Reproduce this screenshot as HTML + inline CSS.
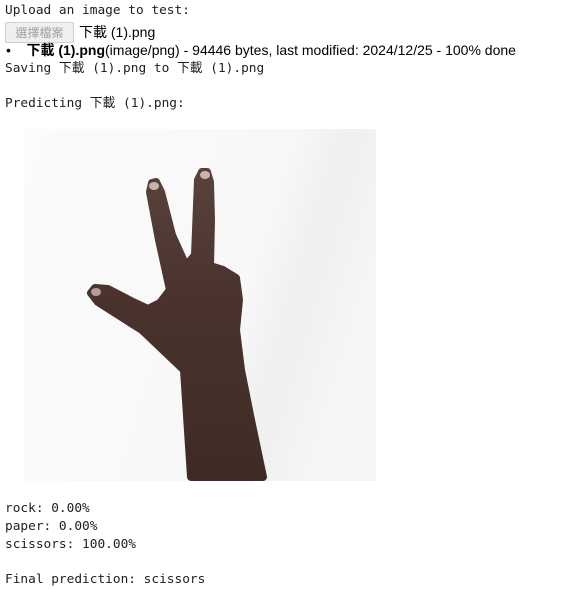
<!DOCTYPE html>
<html><head><meta charset="utf-8"><style>
body{margin:0;width:561px;height:589px;background:#fff;position:relative;overflow:hidden;color:#212121}
.m{position:absolute;left:5px;font-family:"DejaVu Sans Mono","Noto Sans CJK TC",monospace;font-size:12.8px;white-space:pre;line-height:17px}
.s{position:absolute;font-family:"Liberation Sans","Noto Sans CJK TC",sans-serif;font-size:14px;white-space:pre;line-height:17px;color:#000}
.btn{position:absolute;left:5px;top:22px;width:67px;height:19px;border:1px solid #d0d0d0;border-radius:2px;background:#efefef;color:#a0a0a0;font-family:"Noto Sans CJK TC",sans-serif;font-size:12px;line-height:19px;text-align:center}
</style></head><body>
<div class="m" style="top:2px">Upload an image to test:</div>
<div class="btn">選擇檔案</div>
<div class="s" style="left:79px;top:24px">下載 (1).png</div>
<div class="s" style="left:6px;top:42px">•    <b>下載 (1).png</b>(image/png) - 94446 bytes, last modified: 2024/12/25 - 100% done</div>
<div class="m" style="top:60px">Saving 下載 (1).png to 下載 (1).png</div>
<div class="m" style="top:95px">Predicting 下載 (1).png:</div>
<svg style="position:absolute;left:0;top:0" width="561" height="589">
<defs>
<linearGradient id="bg" x1="0" y1="0" x2="1" y2="0.3">
<stop offset="0" stop-color="#fbfbfb"/><stop offset="0.7" stop-color="#f8f8f8"/><stop offset="0.85" stop-color="#efefef"/><stop offset="1" stop-color="#f5f5f5"/></linearGradient>
<linearGradient id="sk" x1="0" y1="0" x2="0" y2="1">
<stop offset="0" stop-color="#5a423c"/><stop offset="0.4" stop-color="#4a332d"/><stop offset="1" stop-color="#3f2b26"/></linearGradient>
</defs>
<rect x="24" y="129" width="352" height="352" fill="url(#bg)"/>
<path fill="url(#sk)" stroke="url(#sk)" stroke-width="8" stroke-linejoin="round" d="M191,477 L184,370 L163,350 L142,330 L120,316 L98,302 L91,293 L95,288 L108,289 L133,302 L148,309 L160,303 L170,290 L159,240 L150,192 L152,183 L156,182 L161,192 L172,235 L186,266 L195,255 L198,180 L202,172 L207,172 L210,182 L211,220 L210,266 L223,270 L236,278 L239,300 L236,330 L241,370 L251,420 L263,477 Z"/>
<ellipse cx="154" cy="186" rx="5" ry="4" fill="#c9b3ad"/>
<ellipse cx="205" cy="175" rx="5" ry="4" fill="#c9b3ad"/>
<ellipse cx="96" cy="292" rx="5" ry="4" fill="#b89c95"/>
</svg>
<div class="m" style="top:500px">rock: 0.00%</div>
<div class="m" style="top:518px">paper: 0.00%</div>
<div class="m" style="top:536px">scissors: 100.00%</div>
<div class="m" style="top:571px">Final prediction: scissors</div>
</body></html>
